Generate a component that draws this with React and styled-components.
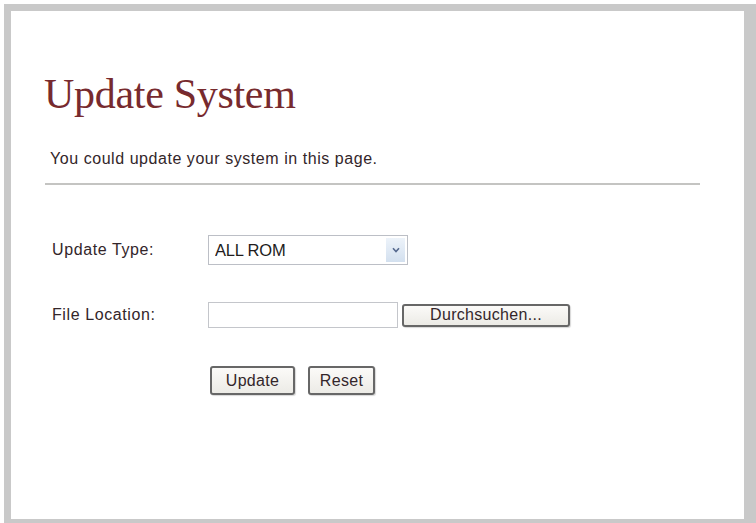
import React from 'react';
import styled, { createGlobalStyle } from 'styled-components';

const GlobalStyle = createGlobalStyle`
  html, body {
    margin: 0;
    padding: 0;
    background: #ffffff;
    overflow: hidden;
  }
  body {
    font-family: "Liberation Sans", Arial, sans-serif;
  }
`;

const Frame = styled.div`
  box-sizing: border-box;
  margin: 4px 0 0 4px;
  width: 752px;
  height: 519px;
  border: 7px solid #c9c9c9;
  border-right-width: 12px;
  border-bottom-width: 4px;
  background: #ffffff;
  padding: 59px 44px 0 33px;
`;

const Title = styled.h1`
  margin: 0;
  font-family: "Liberation Serif", "Times New Roman", serif;
  font-weight: normal;
  font-size: 42px;
  line-height: 48px;
  color: #772a2e;
  letter-spacing: -0.3px;
`;

const Intro = styled.p`
  margin: 32px 0 0 6px;
  font-size: 16px;
  line-height: 18px;
  letter-spacing: 0.55px;
  color: #33262a;
`;

const Divider = styled.hr`
  margin: 15px 0 0 1px;
  border: none;
  height: 2px;
  background: #c4c4c2;
`;

const Form = styled.div`
  display: grid;
  grid-template-columns: 156px auto;
  align-items: center;
  row-gap: 37px;
  margin: 50px 0 0 8px;
`;

const Label = styled.label`
  font-size: 16px;
  letter-spacing: 0.6px;
  color: #33262a;
`;

const Field = styled.div`
  display: flex;
  align-items: center;
  gap: 4px;
`;

const SelectBox = styled.div`
  box-sizing: border-box;
  display: flex;
  align-items: center;
  width: 200px;
  height: 30px;
  border: 1px solid #bcbfc6;
  background: #ffffff;
  padding: 0 2px 0 6px;
`;

const SelectValue = styled.select`
  flex: 1;
  appearance: none;
  border: none;
  background: transparent;
  font-family: "Liberation Sans", Arial, sans-serif;
  font-size: 16.5px;
  letter-spacing: -0.2px;
  color: #221c1c;
  padding: 0;
  outline: none;
`;

const Arrow = styled.span`
  display: flex;
  align-items: center;
  justify-content: center;
  width: 19px;
  height: 24px;
  background: linear-gradient(#edf3fa, #d3e0ef);
`;

const TextInput = styled.input`
  box-sizing: border-box;
  width: 190px;
  height: 26px;
  border: 1px solid #c4c6cb;
  background: #ffffff;
  padding: 0 4px;
`;

const Button = styled.button`
  box-sizing: border-box;
  height: ${p => p.$h || 29}px;
  width: ${p => p.$w}px;
  border: 2px solid #676767;
  border-radius: 3px;
  background: linear-gradient(#fbfaf8, #ecebe6);
  font-family: "Liberation Sans", Arial, sans-serif;
  font-size: 16px;
  letter-spacing: 0.3px;
  color: #33262a;
  padding: 0;
  box-shadow: 1px 1px 1px #d8d8d8;
`;

const Actions = styled.div`
  display: flex;
  gap: 13px;
  margin-top: 1px;
  margin-left: 2px;
`;

const App = () => {
  return (
    <>
      <GlobalStyle />
      <Frame>
        <Title>Update System</Title>
        <Intro>You could update your system in this page.</Intro>
        <Divider />
        <Form>
          <Label>Update Type:</Label>
          <Field>
            <SelectBox>
              <SelectValue defaultValue="all">
                <option value="all">ALL ROM</option>
              </SelectValue>
              <Arrow>
                <svg width="8" height="6" viewBox="0 0 8 6">
                  <path d="M1 1.2 L4 4.5 L7 1.2" fill="none" stroke="#56698e" strokeWidth="1.6" />
                </svg>
              </Arrow>
            </SelectBox>
          </Field>
          <Label>File Location:</Label>
          <Field>
            <TextInput type="text" />
            <Button $w={168} $h={23}>Durchsuchen...</Button>
          </Field>
          <span />
          <Actions>
            <Button $w={85}>Update</Button>
            <Button $w={67}>Reset</Button>
          </Actions>
        </Form>
      </Frame>
    </>
  );
};

export default App;
